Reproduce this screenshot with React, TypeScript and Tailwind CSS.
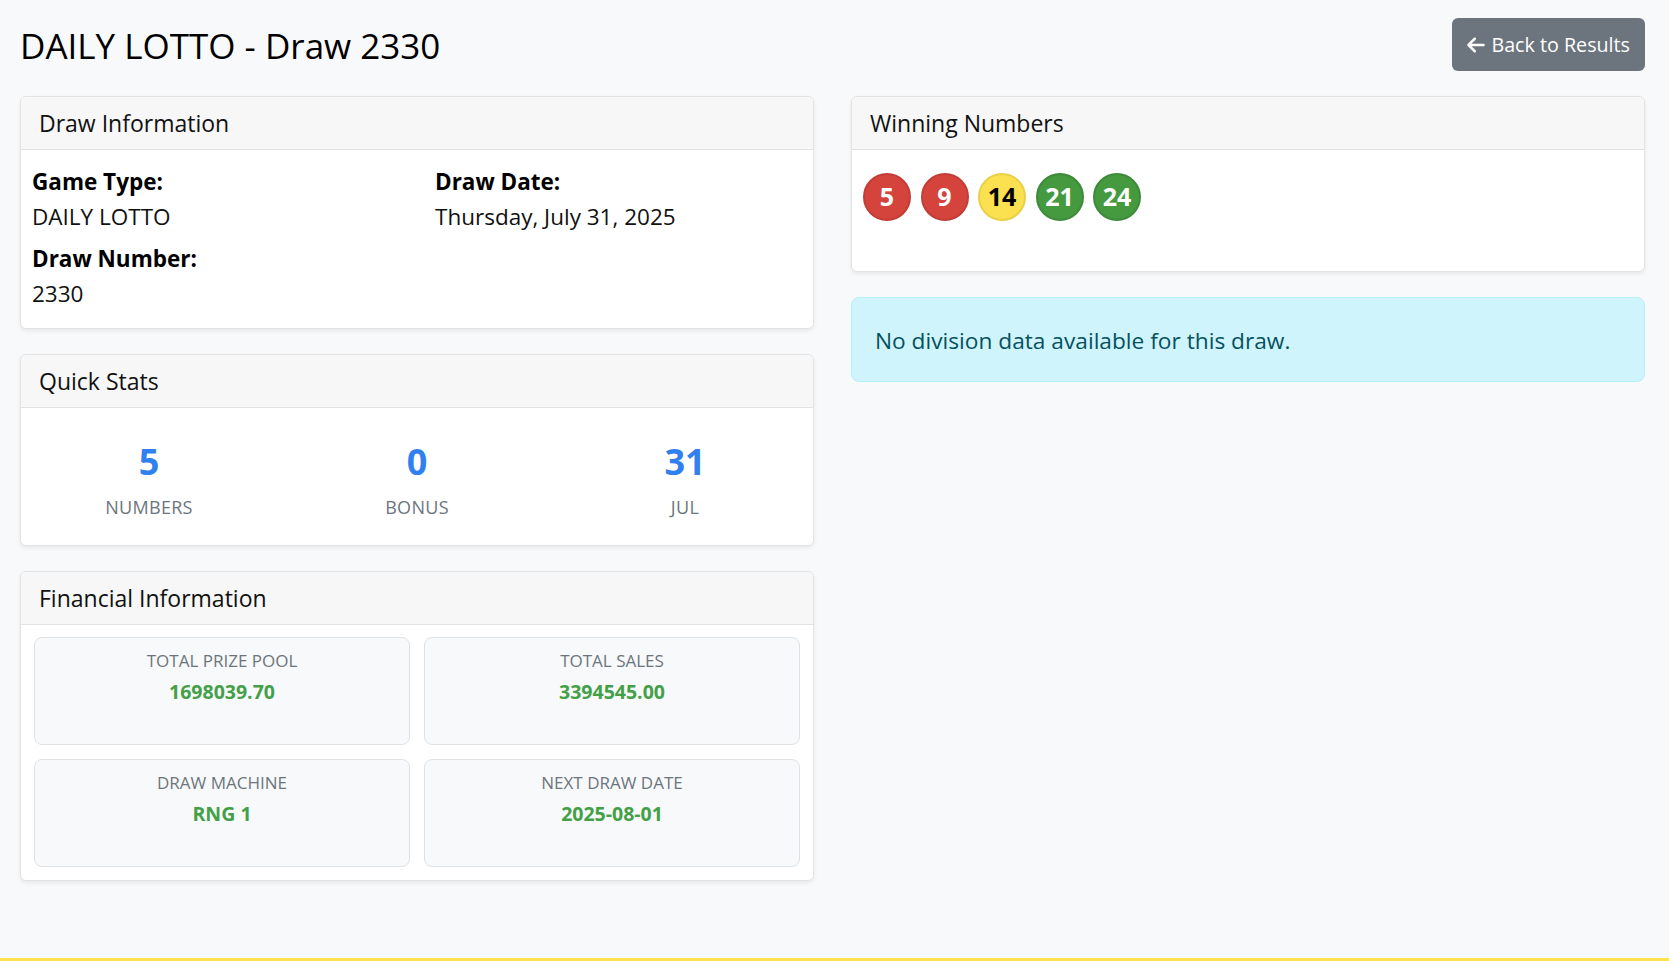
import type { ReactNode } from 'react'

const balls = [
	{ n: 5, c: 'bg-[#d4443c] border-[#c23d36] text-white' },
	{ n: 9, c: 'bg-[#d4443c] border-[#c23d36] text-white' },
	{ n: 14, c: 'bg-[#fbe04f] border-[#ead049] text-black' },
	{ n: 21, c: 'bg-[#45993f] border-[#3d8b39] text-white' },
	{ n: 24, c: 'bg-[#45993f] border-[#3d8b39] text-white' },
]

const finance = [
	{ label: 'Total Prize Pool', value: '1698039.70' },
	{ label: 'Total Sales', value: '3394545.00' },
	{ label: 'Draw Machine', value: 'RNG 1' },
	{ label: 'Next Draw Date', value: '2025-08-01' },
]

function Card({ title, children, className = '' }: { title: string; children: ReactNode; className?: string }) {
	return (
		<div className={`overflow-hidden rounded-[6px] border border-[#e3e3e3] bg-white shadow-[0_2px_4px_rgba(0,0,0,0.07)] ${className}`}>
			<div className="flex h-[53px] items-center border-b border-[#e3e3e3] bg-[#f7f7f7] px-[18px] text-[23px] font-medium text-[#111]">
				{title}
			</div>
			{children}
		</div>
	)
}

function Info({ label, value }: { label: string; value: string }) {
	return (
		<div className="mb-[7px]">
			<div className="text-[22.5px] font-bold leading-[35px] text-black">{label}</div>
			<div className="text-[22.5px] leading-[35px] text-[#111]">{value}</div>
		</div>
	)
}

// font-awesome style arrow
function ArrowIcon() {
	return (
		<svg viewBox="0 0 448 512" className="h-[20px] w-[18px] fill-current">
			<path d="M9.4 233.4c-12.5 12.5-12.5 32.8 0 45.3l160 160c12.5 12.5 32.8 12.5 45.3 0s12.5-32.8 0-45.3L109.2 288 416 288c17.7 0 32-14.3 32-32s-14.3-32-32-32l-306.7 0L214.6 118.6c12.5-12.5 12.5-32.8 0-45.3s-32.8-12.5-45.3 0l-160 160z" />
		</svg>
	)
}

export default function App() {
	return (
		<div className="bg-[#f8f9fa] font-['Open_Sans','Noto_Sans',sans-serif]">
			<div className="min-h-[958px] pl-5 pr-6 pt-[18px]">
				<div className="flex h-[53px] items-center justify-between">
					<h1 className="translate-y-[1px] text-[35px] font-medium leading-[53px] text-black">DAILY LOTTO - Draw 2330</h1>
					<button className="flex h-[53px] items-center gap-[6px] rounded-[6px] bg-[#6c757d] pl-[15px] pr-[15px] text-[19.7px] text-white">
						<ArrowIcon />
						Back to Results
					</button>
				</div>

				<div className="mt-[25px] grid grid-cols-2 gap-x-[37px]">
					<div>
						<Card title="Draw Information" className="mb-[25px]">
							<div className="grid grid-cols-2 gap-x-[36px] px-[11px] pb-[10px] pt-[14px]">
								<Info label="Game Type:" value="DAILY LOTTO" />
								<Info label="Draw Date:" value="Thursday, July 31, 2025" />
								<Info label="Draw Number:" value="2330" />
							</div>
						</Card>

						<Card title="Quick Stats" className="mb-[25px]">
							<div className="-mx-1.5 grid grid-cols-3 pb-[24px] pt-[31px] text-center">
								{[
									['5', 'Numbers'],
									['0', 'Bonus'],
									['31', 'Jul'],
								].map(([v, l]) => (
									<div key={l}>
										<div className="text-[36px] font-bold leading-[46px] text-[#3080f0]">{v}</div>
										<div className="mt-[9px] text-[18px] font-medium uppercase leading-[27px] tracking-[0.3px] text-[#6c757d]">
											{l}
										</div>
									</div>
								))}
							</div>
						</Card>

						<Card title="Financial Information">
							<div className="grid grid-cols-2 gap-[14px] px-[13px] pb-[13px] pt-[12px]">
								{finance.map((f) => (
									<div
										key={f.label}
										className="h-[108px] rounded-[8px] border border-[#dee2e6] bg-[#f8f9fa] pt-[9px] text-center"
									>
										<div className="text-[17px] font-medium uppercase leading-[27px] text-[#6c757d]">{f.label}</div>
										<div className="mt-[3px] text-[19.5px] font-bold leading-[30px] text-[#43a047]">{f.value}</div>
									</div>
								))}
							</div>
						</Card>
					</div>

					<div>
						<Card title="Winning Numbers" className="mb-[25px]">
							<div className="flex gap-[9.5px] px-[11px] pb-[50px] pt-[23px]">
								{balls.map((b) => (
									<div
										key={b.n}
										className={`flex h-[48px] w-[48px] items-center justify-center rounded-full border-2 text-[25px] font-bold ${b.c}`}
									>
										{b.n}
									</div>
								))}
							</div>
						</Card>

						<div className="flex h-[85px] items-center rounded-[8px] border border-[#b6effb] bg-[#cff4fc] px-[23px] pt-[4px] text-[22.7px] text-[#055160]">
							No division data available for this draw.
						</div>
					</div>
				</div>
			</div>
			<footer className="h-[60px] border-t-4 border-[#fde14f] bg-[#f8f9fa]" />
		</div>
	)
}
